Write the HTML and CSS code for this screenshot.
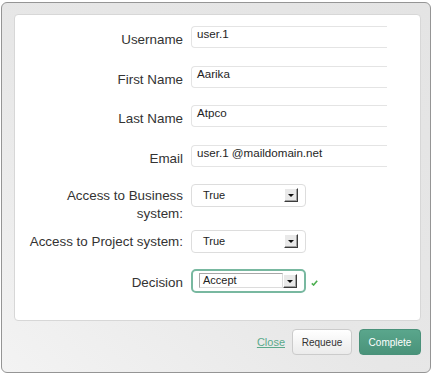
FILE: index.html
```html
<!DOCTYPE html>
<html>
<head>
<meta charset="utf-8">
<link rel="stylesheet" href="styles.css">
</head>
<body>
<div class="dialog">
  <div class="panel">
    <div class="row">
      <div class="label">Username</div>
      <div class="field">user.1</div>
    </div>
    <div class="row">
      <div class="label">First Name</div>
      <div class="field">Aarika</div>
    </div>
    <div class="row">
      <div class="label">Last Name</div>
      <div class="field">Atpco</div>
    </div>
    <div class="row">
      <div class="label">Email</div>
      <div class="field">user.1 @maildomain.net</div>
    </div>
    <div class="row row-select">
      <div class="label">Access to Business system:</div>
      <div class="select"><span class="select-text">True</span><span class="arrow"></span></div>
    </div>
    <div class="row row-select row-tight">
      <div class="label">Access to Project system:</div>
      <div class="select"><span class="select-text">True</span><span class="arrow"></span></div>
    </div>
    <div class="row row-decision">
      <div class="label">Decision</div>
      <div class="control">
        <div class="select decision"><span class="native">Accept</span><span class="arrow"></span></div>
        <svg class="check" width="7" height="6" viewBox="0 0 7 6"><polyline points="0.8,3.4 2.6,5 6.2,0.8" fill="none" stroke="#4caf50" stroke-width="1.6"/></svg>
      </div>
    </div>
  </div>
  <div class="footer">
    <a class="close" href="#">Close</a>
    <span class="btn btn-default">Requeue</span>
    <span class="btn btn-primary">Complete</span>
  </div>
</div>
</body>
</html>
```

FILE: styles.css
```css
html, body {
  margin: 0;
  padding: 0;
  background: #ffffff;
}

body {
  font-family: "Liberation Sans", Arial, sans-serif;
  color: #333333;
}

.dialog {
  box-sizing: border-box;
  width: 430px;
  height: 371px;
  margin: 2px 0 0 1px;
  padding: 11px 9px 0 12px;
  border: 1px solid #959595;
  border-radius: 6px;
  background: linear-gradient(to top right, #f3f3f3 0%, #e7e7e7 45%, #e4e4e4 100%);
}

.panel {
  box-sizing: border-box;
  width: 407px;
  height: 307px;
  padding: 11px 0 0 13px;
  border: 1px solid #d7d7d7;
  border-radius: 4px;
  background: #ffffff;
}

.row {
  display: grid;
  grid-template-columns: 155px auto;
  column-gap: 8px;
  align-items: start;
}

.row + .row {
  margin-top: 17.6px;
}

.row.row-select {
  margin-top: 17px;
}

.row.row-tight {
  margin-top: 7px;
}

.row.row-decision {
  margin-top: 16px;
}

.label {
  text-align: right;
  font-size: 13.4px;
  line-height: 17px;
  padding-top: 5px;
  color: #333333;
}

.row-select .label {
  line-height: 18px;
  padding-top: 3px;
}

.field {
  box-sizing: border-box;
  width: 196px;
  height: 22px;
  padding: 0 6px 0 5px;
  border: 1px solid #e4e4e4;
  border-right: 0;
  border-radius: 4px 0 0 4px;
  font-size: 11.6px;
  line-height: 14px;
  color: #1e1e1e;
  background: #ffffff;
}

.select {
  box-sizing: border-box;
  width: 115px;
  height: 23px;
  display: flex;
  align-items: center;
  justify-content: space-between;
  padding: 0 7px 1px 11px;
  border: 1px solid #dddddd;
  border-radius: 4px;
  background: #ffffff;
  font-size: 11px;
  color: #222222;
}

.control {
  display: flex;
  align-items: center;
  gap: 5px;
}

.select.decision {
  height: 24px;
  padding: 0 6px 0 6px;
  justify-content: flex-start;
  border: 2px solid #78b8a0;
  border-radius: 5px;
}

.native {
  box-sizing: border-box;
  width: 84px;
  height: 15px;
  padding-left: 3px;
  border: 1px solid #a8a8a8;
  border-right-color: #dcdcdc;
  border-bottom-color: #dcdcdc;
  font-size: 11px;
  line-height: 13px;
  color: #222222;
}

.arrow {
  box-sizing: border-box;
  width: 14px;
  height: 14px;
  position: relative;
  background: #e9e9e9;
  border-top: 1px solid #ffffff;
  border-left: 1px solid #ffffff;
  border-right: 1px solid #3c3c3c;
  border-bottom: 1px solid #3c3c3c;
  box-shadow: inset -1px -1px 0 #a0a0a0;
}

.arrow::after {
  content: "";
  position: absolute;
  left: 3px;
  top: 5px;
  width: 0;
  height: 0;
  border-left: 3px solid transparent;
  border-right: 3px solid transparent;
  border-top: 3px solid #111111;
}

.check {
  display: block;
  margin-top: 4px;
}

.footer {
  display: flex;
  justify-content: flex-end;
  align-items: center;
  gap: 7px;
  margin-top: 8px;
}

.close {
  font-size: 11px;
  color: #5ba98b;
  text-decoration: underline;
}

.btn {
  box-sizing: border-box;
  height: 26px;
  display: flex;
  align-items: center;
  justify-content: center;
  border-radius: 4px;
  font-size: 10px;
}

.btn-default {
  width: 60px;
  color: #333333;
  border: 1px solid #cbcbcb;
  background: linear-gradient(to bottom, #ffffff, #ebebeb);
}

.btn-primary {
  width: 62px;
  color: #ffffff;
  border: 1px solid #4a917a;
  background: linear-gradient(to bottom, #5aa68c, #4a937a);
}
```
